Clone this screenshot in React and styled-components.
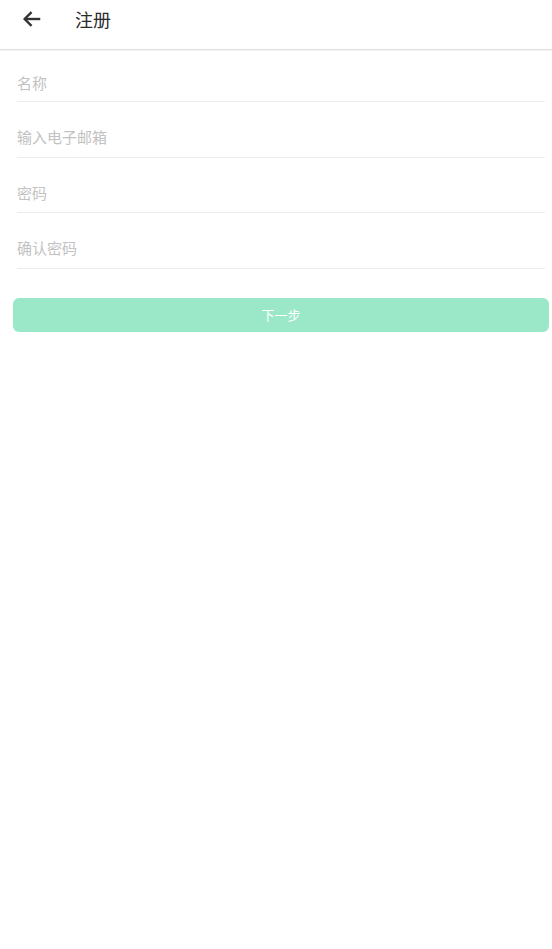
import React from "react";
import styled, { createGlobalStyle } from "styled-components";

const Global = createGlobalStyle`
  html, body { margin: 0; padding: 0; background: #fff; }
  body { font-family: "Noto Sans CJK SC", "Noto Sans", sans-serif; }
  * { box-sizing: border-box; }
`;

const Page = styled.div`
  width: 552px;
  min-height: 949px;
  background: #fff;
`;

const Header = styled.header`
  height: 50px;
  display: flex;
  align-items: center;
  padding: 0 0 12px 20px;
  border-bottom: 1px solid #dedede;
  box-shadow: 0 1px 1px rgba(0,0,0,0.04);
`;

const Back = styled.button`
  width: 24px;
  height: 24px;
  padding: 0;
  border: none;
  background: none;
  display: flex;
  align-items: center;
  justify-content: center;
  color: #333;
`;

const Title = styled.h1`
  margin: 0 0 0 31px;
  font-size: 18px;
  font-weight: 400;
  color: #2a2a2a;
  line-height: 24px;
`;

const Form = styled.div`
  display: flex;
  flex-direction: column;
  padding: 0 7px 0 17px;
`;

const Field = styled.div`
  height: 55.5px;
  display: flex;
  align-items: flex-end;
  border-bottom: 1.5px solid #ececec;
  padding-bottom: 8.5px;
  &:first-child { height: 52px; padding-bottom: 7px; }
`;

const Input = styled.input`
  width: 100%;
  border: none;
  outline: none;
  padding: 0;
  font-family: inherit;
  font-size: 15px;
  line-height: 22px;
  color: #333;
  &::placeholder { color: #c2c2c2; }
`;

const Submit = styled.button`
  margin: 29px 3px 0 13px;
  height: 34px;
  border: none;
  border-radius: 6px;
  background: #9be8c8;
  color: #fff;
  font-family: inherit;
  font-size: 13px;
  display: flex;
  align-items: center;
  justify-content: center;
  padding: 0;
  width: calc(100% - 16px);
`;

export default function App() {
  return (
    <Page>
      <Global />
      <Header>
        <Back aria-label="back">
          <svg width="22" height="22" viewBox="0 0 24 24" fill="none" stroke="#333" strokeWidth="2.6" strokeLinecap="butt" strokeLinejoin="miter">
            <path d="M21 12H4" />
            <path d="M11.5 4.5L4 12l7.5 7.5" />
          </svg>
        </Back>
        <Title>注册</Title>
      </Header>
      <Form>
        <Field><Input placeholder="名称" /></Field>
        <Field><Input placeholder="输入电子邮箱" /></Field>
        <Field><Input type="password" placeholder="密码" /></Field>
        <Field><Input type="password" placeholder="确认密码" /></Field>
      </Form>
      <Submit>下一步</Submit>
    </Page>
  );
}
